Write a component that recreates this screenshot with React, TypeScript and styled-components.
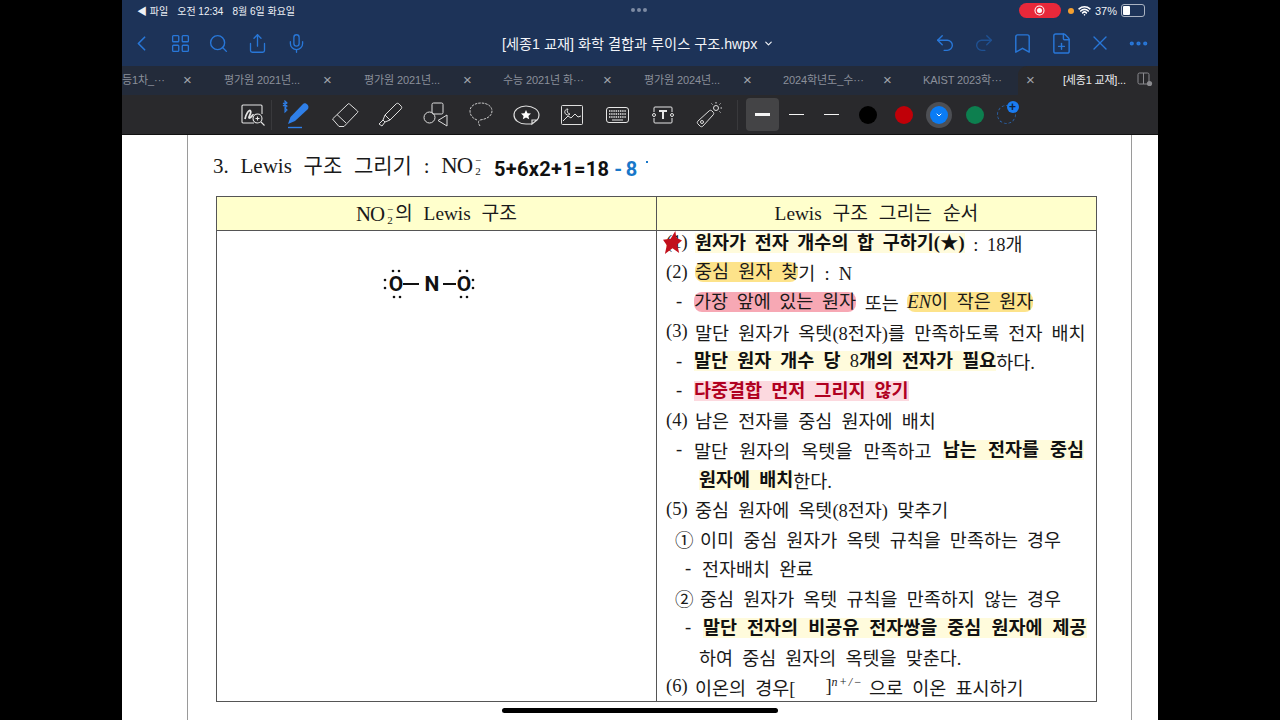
import React from "react";
import styled, { createGlobalStyle } from "styled-components";
import {
  Bookmark,
  ChevronDown,
  ChevronLeft,
  FilePlus,
  LayoutGrid,
  Mic,
  MoreHorizontal,
  Redo2,
  Search,
  Share,
  Undo2,
  Wifi,
  X,
} from "lucide-react";

const tabs = [
  { label: "등1차_···", width: 70, pad: 0 },
  { label: "평가원 2021년...", width: 140, pad: 32 },
  { label: "평가원 2021년...", width: 140, pad: 32 },
  { label: "수능 2021년 화···", width: 140, pad: 31 },
  { label: "평가원 2024년...", width: 140, pad: 32 },
  { label: "2024학년도_수···", width: 140, pad: 31 },
];

const App = () => {
  return (
    <>
      <GlobalStyle />
      <Frame>
        <StatusBar>
          <StatusLeft>
            <span>◀ 파일</span>
            <span>오전 12:34</span>
            <span>8월 6일 화요일</span>
          </StatusLeft>
          <Dots>
            <i />
            <i />
            <i />
          </Dots>
          <StatusRight>
            <RecordPill>
              <RecordDot />
            </RecordPill>
            <OrangeDot />
            <Wifi size={13} strokeWidth={3} color="#fff" />
            <span>37%</span>
            <Battery>
              <BatteryFill style={{ width: "37%" }} />
            </Battery>
          </StatusRight>
        </StatusBar>

        <NavBar>
          <NavGroup>
            <NavIcon><ChevronLeft size={25} strokeWidth={1.6} /></NavIcon>
            <NavIcon><LayoutGrid size={21} strokeWidth={1.5} /></NavIcon>
            <NavIcon><Search size={21} strokeWidth={1.6} /></NavIcon>
            <NavIcon><Share size={21} strokeWidth={1.5} /></NavIcon>
            <NavIcon><Mic size={21} strokeWidth={1.5} /></NavIcon>
          </NavGroup>
          <Title>
            [세종1 교재] 화학 결합과 루이스 구조.hwpx
            <ChevronDown size={11} strokeWidth={2.5} />
          </Title>
          <NavGroup>
            <NavIcon><Undo2 size={22} strokeWidth={1.5} /></NavIcon>
            <NavIcon $dim><Redo2 size={22} strokeWidth={1.5} /></NavIcon>
            <NavIcon><Bookmark size={23} strokeWidth={1.5} /></NavIcon>
            <NavIcon><FilePlus size={23} strokeWidth={1.5} /></NavIcon>
            <NavIcon><X size={24} strokeWidth={1.4} /></NavIcon>
            <NavIcon><MoreHorizontal size={23} strokeWidth={2.4} /></NavIcon>
          </NavGroup>
        </NavBar>

        <TabBar>
          {tabs.map((t, i) => (
            <Tab key={i} $width={t.width} $pad={t.pad}>
              <TabLabel>{t.label}</TabLabel>
              <TabClose>×</TabClose>
            </Tab>
          ))}
          <Tab $width={126} $pad={31}>
            <TabLabel>KAIST 2023학···</TabLabel>
          </Tab>
          <ActiveTab>
            <TabClose>×</TabClose>
            <ActiveLabel>[세종1 교재]...</ActiveLabel>
            <svg width="16" height="16" viewBox="0 0 16 16" fill="none" stroke="#8a8a8e">
              <rect x="1" y="2" width="11" height="11" rx="1.5" />
              <path d="M6.5 2v11" />
              <circle cx="12.5" cy="12.5" r="2.6" fill="#8a8a8e" stroke="none" />
            </svg>
          </ActiveTab>
        </TabBar>

        <ToolBar>
          <ToolFirst>
            <svg width="24" height="24" viewBox="0 0 24 24" fill="none" stroke="#e4e4e4" strokeWidth="1.1">
              <path d="M13 20H2a1 1 0 0 1-1-1V3a1 1 0 0 1 1-1h18a1 1 0 0 1 1 1v8" />
              <path d="M4 16c1-5 4-10 5.500-8s-3 7-1 7 3-4 4-3" strokeWidth="1.800" />
              <circle cx="16.500" cy="15.500" r="4.500" fill="#29292c" />
              <path d="M14.500 15.500h4M16.500 13.500v4M20 19l3.500 3.500" />
            </svg>
          </ToolFirst>
          <ToolDivider />
          <PenTool>
            <svg width="30" height="30" viewBox="0 0 30 30" fill="none">
              <path d="M1 3l4 3-2 2V1l2 2-4 3M3 8l2 2-2 2V8" stroke="#2f7fe8" strokeWidth="1.1" />
              <path d="M6 24l2.500-7L21 4c2-2 7 1 5 5L13 21z" fill="#2f7fe8" />
              <path d="M6 27.500h14" stroke="#2f7fe8" strokeWidth="1.400" />
            </svg>
          </PenTool>
          <Tool>
            <svg width="28" height="26" viewBox="0 0 28 26" fill="none" stroke="#dedede">
              <path d="M1.500 17L17 2a1 1 0 0 1 1.500 0l8 7a1 1 0 0 1 0 1.500L13 24.500H8z" />
              <path d="M6 12.500l9 8.500" />
            </svg>
          </Tool>
          <Tool>
            <svg width="26" height="26" viewBox="0 0 26 26" fill="none" stroke="#dedede">
              <path d="M8 13L19 2c1-1 2-1 3 0l2 2c1 1 1 2 0 3L13 18z" />
              <path d="M8 13l-2 5 2 2 5-2M6 18l-4 4 3 2 3-4" />
            </svg>
          </Tool>
          <Tool>
            <svg width="26" height="26" viewBox="0 0 26 26" fill="none" stroke="#dedede">
              <rect x="9" y="1" width="11" height="11" rx="1.500" />
              <circle cx="6.500" cy="15.500" r="5.500" />
              <path d="M24 13v11l-9-5.500z" />
            </svg>
          </Tool>
          <Tool>
            <svg width="24" height="26" viewBox="0 0 24 26" fill="none" stroke="#c8c8c8" strokeDasharray="2.500 1">
              <path d="M8 18C3 16 1 13 1 9c0-5 5-8 11-8s11 3 11 8-5 8-12 9c-2 1-2 3 0 6" />
            </svg>
          </Tool>
          <Tool>
            <svg width="27" height="22" viewBox="0 0 27 22" fill="none" stroke="#dedede" strokeWidth="1.200">
              <path d="M19 20H13C6 20 1 16 1 11S6 2 13 2s13 4 13 9c0 2-1 4-2 5l-5 4v-4h5" />
              <path d="M13 6l1.500 3.200 3.500.4-2.600 2.300.8 3.400-3.200-1.800-3.200 1.800.8-3.400L8 9.600l3.500-.4z" fill="#fff" stroke="none" />
            </svg>
          </Tool>
          <Tool>
            <svg width="22" height="20" viewBox="0 0 22 20" fill="none" stroke="#dedede">
              <rect x=".5" y=".5" width="21" height="19" rx="1" />
              <path d="M2 16l5-5 3 2 4-4 3 3 3-1" />
              <path d="M7 4a3 3 0 1 0 2 5 3 3 0 0 1-2-5z" />
            </svg>
          </Tool>
          <Tool>
            <svg width="23" height="16" viewBox="0 0 23 16" fill="none" stroke="#e6e6e6">
              <rect x=".5" y=".5" width="22" height="15" rx="2.500" />
              <path d="M3 4h17M3 7h17M3 10h17" strokeWidth="1.600" strokeDasharray="1.400 .8" />
              <path d="M6 13h11" />
            </svg>
          </Tool>
          <Tool>
            <svg width="24" height="18" viewBox="0 0 24 18" fill="none" stroke="#e6e6e6">
              <path d="M3 6V2a1 1 0 0 1 1-1h16a1 1 0 0 1 1 1v4M3 12v4a1 1 0 0 0 1 1h16a1 1 0 0 0 1-1v-4" />
              <circle cx="3" cy="9" r="1.500" />
              <circle cx="21" cy="9" r="1.500" />
              <path d="M8 5h8M12 5v8" strokeWidth="2" />
            </svg>
          </Tool>
          <Tool>
            <svg width="26" height="26" viewBox="0 0 26 26" fill="none" stroke="#dedede">
              <path d="M2 19L13 9c1-1 2-1 3 0l1 1c1 1 1 2 0 3L7 24c-1 1-2 1-3 0l-2-2c-1-1-1-2 0-3z" />
              <circle cx="6" cy="20" r="1.500" />
              <circle cx="20" cy="6" r="2.500" />
              <path d="M20 0v1.500M26 6h-1.500M24.500 1.500l-1 1M24.500 10.500l-1-1M15.500 1.500l1 1" />
            </svg>
          </Tool>
          <ToolDivider $left={5} />
          <StrokeBox>
            <StrokeLine $h={2.5} />
          </StrokeBox>
          <StrokeItem>
            <StrokeLine $h={1} />
          </StrokeItem>
          <StrokeItem>
            <StrokeLine $h={1.5} />
          </StrokeItem>
          <Swatches>
            <Swatch $color="#000" />
            <Swatch $color="#c00008" />
            <Swatch $color="#0a7cf5" $selected>
              <ChevronDown size={8} strokeWidth={3} color="#fff" />
            </Swatch>
            <Swatch $color="#0d7f4f" />
            <AddSwatch>
              <AddBadge>+</AddBadge>
            </AddSwatch>
          </Swatches>
        </ToolBar>

        <Doc>
          <Page>
            <Heading>
              <span>3. Lewis 구조 그리기 : </span>
              <Formula />
              <Hand>5+6x2+1=18</Hand>
              <Hand $blue>-8</Hand>
              <HandDot />
            </Heading>
            <Table>
              <HeadCell>
                <Formula />의 Lewis 구조
              </HeadCell>
              <HeadCell>Lewis 구조 그리는 순서</HeadCell>
              <LeftCell>
                <LewisDrawing width="100" height="36" viewBox="0 0 100 36" fill="#111">
                  <text x="13" y="27">O</text>
                  <text x="49" y="27">N</text>
                  <text x="81" y="27">O</text>
                  <path d="M20 20h16M60 20h13" stroke="#111" strokeWidth="2.200" />
                  <circle cx="2" cy="16" r="1.300" /><circle cx="2" cy="24" r="1.300" />
                  <circle cx="10" cy="7" r="1.300" /><circle cx="16" cy="7" r="1.300" />
                  <circle cx="11" cy="33" r="1.300" /><circle cx="17" cy="33" r="1.300" />
                  <circle cx="77" cy="7" r="1.300" /><circle cx="84" cy="7" r="1.300" />
                  <circle cx="78" cy="33" r="1.300" /><circle cx="84" cy="33" r="1.300" />
                  <circle cx="90" cy="16" r="1.300" /><circle cx="90" cy="24" r="1.300" />
                </LewisDrawing>
              </LeftCell>
              <StepsCell>
                <Row $ws={4}>
                  <Marker $width={29}>
                    (1)
                    <RedStar viewBox="0 0 20 24">
                      <path d="M13 0l1 7 6 3-5 4 2 9-7-5-8 6 2-9-4-6 8-1z" />
                    </RedStar>
                  </Marker>
                  <Mark $kind="pale"><b>원자가 전자 개수의 합 구하기(★)</b></Mark>&nbsp;: 18개
                </Row>
                <Row>
                  <Marker $width={29}>(2)</Marker>
                  <Mark $kind="yellow">중심 원자 찾</Mark>기 : N
                </Row>
                <Row $indent={10} $ws={4}>
                  <Marker $width={18}>-</Marker>
                  <Mark $kind="rose">가장 앞에 있는 원자</Mark>&nbsp;또는&nbsp;
                  <Mark $kind="yellow"><em>EN</em>이 작은 원자</Mark>
                </Row>
                <Row>
                  <Marker $width={29}>(3)</Marker>말단 원자가 옥텟(8전자)를 만족하도록 전자 배치
                </Row>
                <Row $indent={10}>
                  <Marker $width={18}>-</Marker>
                  <Mark $kind="pale"><b>말단 원자 개수 당 </b>8<b>개의 전자가 필요</b></Mark>하다.
                </Row>
                <Row $indent={10}>
                  <Marker $width={18}>-</Marker>
                  <Mark $kind="blush"><Warn>다중결합 먼저 그리지 않기</Warn></Mark>
                </Row>
                <Row>
                  <Marker $width={29}>(4)</Marker>남은 전자를 중심 원자에 배치
                </Row>
                <Row $indent={10} $ws={6.5}>
                  <Marker $width={18}>-</Marker>
                  말단 원자의 옥텟을 만족하고&nbsp;
                  <Mark $kind="pale"><b>남는 전자를 중심</b></Mark>
                </Row>
                <Row $indent={33}>
                  <Mark $kind="pale"><b>원자에 배치</b></Mark>한다.
                </Row>
                <Row>
                  <Marker $width={29}>(5)</Marker>중심 원자에 옥텟(8전자) 맞추기
                </Row>
                <Row $indent={9}>
                  <Marker $width={25}>①</Marker>이미 중심 원자가 옥텟 규칙을 만족하는 경우
                </Row>
                <Row $indent={19}>
                  <Marker $width={17}>-</Marker>전자배치 완료
                </Row>
                <Row $indent={9}>
                  <Marker $width={25}>②</Marker>중심 원자가 옥텟 규칙을 만족하지 않는 경우
                </Row>
                <Row $indent={19} $ws={5.4}>
                  <Marker $width={18}>-</Marker>
                  <Mark $kind="pale"><b>말단 전자의 비공유 전자쌍을 중심 원자에 제공</b></Mark>
                </Row>
                <Row $indent={33}>하여 중심 원자의 옥텟을 맞춘다.</Row>
                <Row>
                  <Marker $width={29}>(6)</Marker>이온의 경우[<Gap />]<IonSup>n+/−</IonSup>으로 이온 표시하기
                </Row>
              </StepsCell>
            </Table>
          </Page>
        </Doc>
        <HomeBar />
      </Frame>
    </>
  );
};

const Formula = () => (
  <FormulaWrap>
    NO
    <Scripts>
      <span>−</span>
      <span>2</span>
    </Scripts>
  </FormulaWrap>
);

export default App;

const GlobalStyle = createGlobalStyle`
  html, body {
    margin: 0;
    padding: 0;
    background: #000;
  }
`;

const Frame = styled.div`
  position: relative;
  width: 1036px;
  height: 720px;
  margin: 0 auto;
  overflow: hidden;
  display: flex;
  flex-direction: column;
  background: #fff;
  font-family: "Liberation Sans", "Noto Sans CJK KR", sans-serif;
`;

const StatusBar = styled.div`
  height: 21px;
  flex: none;
  display: flex;
  align-items: center;
  justify-content: space-between;
  position: relative;
  padding: 0 13px 0 15px;
  background: #1d3358;
  color: #eef1f6;
  font-size: 10px;
`;

const StatusLeft = styled.div`
  display: flex;
  gap: 9px;
`;

const Dots = styled.div`
  position: absolute;
  left: 509px;
  top: 8px;
  display: flex;
  gap: 2px;

  i {
    width: 4px;
    height: 4px;
    border-radius: 50%;
    background: #7d8ba3;
  }
`;

const StatusRight = styled.div`
  display: flex;
  align-items: center;
  gap: 4px;
  font-size: 11px;
`;

const RecordPill = styled.div`
  width: 42px;
  height: 15px;
  margin-right: 3px;
  border-radius: 8px;
  background: #e8283a;
  display: flex;
  align-items: center;
  justify-content: center;
`;

const RecordDot = styled.div`
  width: 5px;
  height: 5px;
  border-radius: 50%;
  background: #fff;
  box-shadow: 0 0 0 1.5px #e8283a, 0 0 0 2.5px #fff;
`;

const OrangeDot = styled.div`
  width: 6px;
  height: 6px;
  border-radius: 50%;
  background: #f5a030;
`;

const Battery = styled.div`
  width: 20px;
  height: 9px;
  border: 1px solid #aab3c2;
  border-radius: 3px;
  padding: 1px;
`;

const BatteryFill = styled.div`
  height: 100%;
  background: #fff;
  border-radius: 1px;
`;

const NavBar = styled.div`
  height: 44px;
  flex: none;
  display: flex;
  align-items: center;
  justify-content: space-between;
  padding: 0 0 1px 0;
  background: #1d3358;
`;

const NavGroup = styled.div`
  display: flex;
  align-items: center;
`;

const NavIcon = styled.div<{ $dim?: boolean }>`
  width: 38.7px;
  display: flex;
  justify-content: center;
  color: ${(p) => (p.$dim ? "#1f5192" : "#2877d8")};
`;

const Title = styled.div`
  display: flex;
  align-items: center;
  gap: 6px;
  margin-left: 35px;
  color: #f2f4f8;
  font-size: 14.2px;
`;

const TabBar = styled.div`
  height: 29px;
  flex: none;
  display: flex;
  align-items: center;
  overflow: hidden;
  background: #232b3a;
`;

const Tab = styled.div<{ $width: number; $pad: number }>`
  width: ${(p) => p.$width}px;
  padding-left: ${(p) => p.$pad}px;
  padding-bottom: 3px;
  box-sizing: border-box;
  flex: none;
  display: flex;
  align-items: center;
  justify-content: space-between;
  color: #8b909a;
  font-size: 11px;
`;

const TabLabel = styled.span`
  white-space: nowrap;
  letter-spacing: -0.1px;
`;

const TabClose = styled.span`
  width: 9px;
  text-align: center;
  color: #a0a4ac;
  font-size: 15px;
  line-height: 1;
`;

const ActiveTab = styled.div`
  flex: 1;
  height: 100%;
  display: flex;
  align-items: center;
  box-sizing: border-box;
  padding: 0 0 3px 8px;
  border-radius: 9px 0 0 0;
  background: #29292c;
`;

const ActiveLabel = styled.span`
  width: 74px;
  margin-left: 28px;
  color: #eceef0;
  font-size: 11px;
  white-space: nowrap;
  letter-spacing: -0.2px;
`;

const ToolBar = styled.div`
  height: 40px;
  flex: none;
  display: flex;
  align-items: center;
  box-sizing: border-box;
  padding-left: 113px;
  background: #29292c;
  border-bottom: 1px solid #111;
`;

const Tool = styled.div`
  width: 45.5px;
  flex: none;
  display: flex;
  justify-content: center;
`;

const ToolFirst = styled(Tool)`
  width: 36px;
`;

const PenTool = styled(Tool)`
  width: 50px;
`;

const ToolDivider = styled.div<{ $left?: number }>`
  width: 1px;
  height: 30px;
  flex: none;
  margin-left: ${(p) => p.$left ?? 0}px;
  background: #39393c;
`;

const StrokeBox = styled.div`
  width: 33px;
  height: 33px;
  flex: none;
  margin-left: 8px;
  border-radius: 4px;
  background: #444446;
  display: flex;
  align-items: center;
  justify-content: center;
`;

const StrokeItem = styled.div`
  width: 35px;
  flex: none;
  display: flex;
  justify-content: center;
`;

const StrokeLine = styled.div<{ $h: number }>`
  width: 15px;
  height: ${(p) => p.$h}px;
  background: #f4f4f4;
`;

const Swatches = styled.div`
  display: flex;
  align-items: center;
  margin-left: 2px;
`;

const Swatch = styled.div<{ $color: string; $selected?: boolean }>`
  width: 18px;
  height: 18px;
  margin: 0 8.75px;
  border-radius: 50%;
  background: ${(p) => p.$color};
  display: flex;
  align-items: center;
  justify-content: center;
  box-shadow: ${(p) => (p.$selected ? "0 0 0 4px #4d4f54" : "none")};
`;

const AddSwatch = styled.div`
  position: relative;
  width: 17px;
  height: 17px;
  margin-left: 4px;
  border: 1px dashed #2a62a8;
  border-radius: 50%;
`;

const AddBadge = styled.div`
  position: absolute;
  top: -5px;
  right: -4px;
  width: 12px;
  height: 12px;
  border-radius: 50%;
  background: #1a7cf2;
  color: #10233f;
  font-size: 12px;
  font-weight: 700;
  line-height: 12px;
  text-align: center;
`;

const Doc = styled.div`
  flex: 1;
  min-height: 0;
  background: #fff;
  padding: 0 26px 0 65px;
`;

const Page = styled.div`
  height: 100%;
  box-sizing: border-box;
  padding: 0 33px 0 28px;
  border-left: 1px solid #9a9a9a;
  border-right: 1px solid #9a9a9a;
  font-family: "Liberation Serif", "Noto Sans CJK KR", serif;
  font-size: 18px;
  color: #1a1a1a;
`;

const Heading = styled.div`
  height: 61px;
  box-sizing: border-box;
  padding: 0 0 4px 0;
  margin-left: -3px;
  display: flex;
  align-items: center;
  font-size: 21px;
  word-spacing: 6.5px;
  white-space: pre;
`;

const FormulaWrap = styled.span`
  display: inline-flex;
  align-items: center;
  margin-top: 5px;
  font-size: 1.08em;
  letter-spacing: -1px;
`;

const Scripts = styled.span`
  display: inline-flex;
  flex-direction: column;
  width: 11px;
  margin: -6px 0 -6px 0;
  font-size: 11px;
  line-height: 11px;
  text-align: center;
`;

const Hand = styled.span<{ $blue?: boolean }>`
  margin-left: ${(p) => (p.$blue ? 5 : 11)}px;
  margin-top: 10px;
  font-family: Roboto, sans-serif;
  font-weight: 700;
  font-size: 20px;
  letter-spacing: ${(p) => (p.$blue ? 3.5 : 0.3)}px;
  color: ${(p) => (p.$blue ? "#1877c9" : "#111")};
`;

const HandDot = styled.i`
  width: 2px;
  height: 2px;
  margin: -4px 0 0 5px;
  background: #1877c9;
`;

const Table = styled.div`
  display: grid;
  grid-template-columns: 440px 439px;
  grid-template-rows: 34px 470px;
  border: 1px solid #555;
  width: 881px;
  box-sizing: border-box;
`;

const HeadCell = styled.div`
  display: flex;
  align-items: center;
  justify-content: center;
  padding-bottom: 3px;
  background: #ffffcc;
  border-bottom: 1px solid #555;
  font-size: 19.3px;
  word-spacing: 6px;
  white-space: pre;

  &:first-child {
    border-right: 1px solid #555;
  }
`;

const LeftCell = styled.div`
  border-right: 1px solid #555;
  padding: 33px 0 0 166px;
`;

const LewisDrawing = styled.svg`
  font-family: "Liberation Sans Narrow", Roboto, sans-serif;
  font-weight: 700;
  font-size: 21px;
  text-anchor: middle;
`;

const StepsCell = styled.div`
  padding: 0 0 0 9px;
  margin-top: -3px;
  overflow: hidden;
`;

const Row = styled.div<{ $indent?: number; $ws?: number }>`
  height: 29.6px;
  display: flex;
  align-items: center;
  padding-left: ${(p) => p.$indent ?? 0}px;
  white-space: pre;
  word-spacing: ${(p) => p.$ws ?? 4.5}px;
  font-size: 18.5px;
`;

const Marker = styled.span<{ $width: number }>`
  position: relative;
  width: ${(p) => p.$width}px;
  flex: none;
`;

const RedStar = styled.svg`
  position: absolute;
  left: -3px;
  top: -1px;
  width: 19px;
  height: 23px;
  fill: #c20f1c;
`;

const markColors = {
  pale: "#fffbdc",
  yellow: "#fde38a",
  rose: "#f7a8b4",
  blush: "#fcd9df",
};

const Mark = styled.span<{ $kind: keyof typeof markColors }>`
  display: inline-block;
  line-height: 20px;
  background: ${(p) => markColors[p.$kind]};
  border-radius: ${(p) => (p.$kind === "yellow" || p.$kind === "rose" ? "8px" : "0")};
  white-space: pre;

  b {
    font-weight: 700;
    color: #111;
  }
`;

const Warn = styled.b`
  && {
    color: #b00020;
  }
`;

const Gap = styled.span`
  width: 30px;
  flex: none;
`;

const IonSup = styled.i`
  margin: -9px 6px 0 0;
  font-size: 12px;
  letter-spacing: 1.5px;
`;

const HomeBar = styled.div`
  position: absolute;
  left: 380px;
  bottom: 7px;
  width: 276px;
  height: 5px;
  border-radius: 3px;
  background: #000;
`;
